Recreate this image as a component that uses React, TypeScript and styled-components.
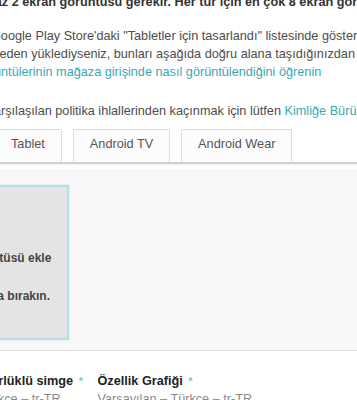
import styled, { createGlobalStyle } from 'styled-components';

const GlobalStyle = createGlobalStyle`
  body {
    margin: 0;
    background: #ffffff;
    font-family: "Liberation Sans", Arial, sans-serif;
  }
`;

interface LineProps {
  $shift: number;
  $gap?: number;
}

function App() {
  return (
    <Page>
      <GlobalStyle />
      <Intro>
        <Rule $shift={-25}>
          En az 2 ekran görüntüsü gerekir. Her tür için en çok 8 ekran görüntüsü ekleyebilirsiniz.
        </Rule>
        <Line $shift={-9} $gap={16}>
          Google Play Store'daki "Tabletler için tasarlandı" listesinde gösterilmek için
        </Line>
        <Line $shift={-21}>
          önceden yüklediyseniz, bunları aşağıda doğru alana taşıdığınızdan emin olun.
        </Line>
        <Line $shift={-61}>
          <Link>Ekran görüntülerinin mağaza girişinde nasıl görüntülendiğini öğrenin</Link>
        </Line>
        <Line $shift={-14.5} $gap={21}>
          Karşılaşılan politika ihlallerinden kaçınmak için lütfen <Link>Kimliğe Bürünme</Link>{' '}
          politikasını okuyun.
        </Line>
      </Intro>

      <TabBar>
        <Tab>Tablet</Tab>
        <Tab>Android TV</Tab>
        <Tab>Android Wear</Tab>
      </TabBar>

      <Panel>
        <DropZone>
          <DropText>Ekran görüntüsü ekle</DropText>
          <DropText $gap={24}>Ya da buraya bırakın.</DropText>
        </DropZone>
      </Panel>

      <FieldRow>
        <Field $width={179.5}>
          <FieldLabel>
            Yüksek çözünürlüklü simge <Star>*</Star>
          </FieldLabel>
          <FieldHint>Varsayılan – Türkçe – tr-TR</FieldHint>
        </Field>
        <Field>
          <FieldLabel>
            Özellik Grafiği <Star>*</Star>
          </FieldLabel>
          <FieldHint>Varsayılan – Türkçe – tr-TR</FieldHint>
        </Field>
      </FieldRow>
    </Page>
  );
}

export default App;

const Page = styled.div`
  width: 357px;
  height: 400px;
  overflow: hidden;
  font-size: 12.7px;
  color: #4d4d4d;
`;

const Intro = styled.div`
  display: flex;
  flex-direction: column;
  margin-top: -7px;
`;

const Line = styled.div<LineProps>`
  white-space: nowrap;
  line-height: 18px;
  margin-left: ${({ $shift }) => $shift}px;
  margin-top: ${({ $gap }) => $gap ?? 0}px;
`;

const Rule = styled(Line)`
  font-weight: 700;
  color: #333333;
`;

const Link = styled.span`
  color: #3aa8b2;
`;

const TabBar = styled.div`
  display: flex;
  gap: 11px;
  margin-top: 9px;
  margin-left: -6px;
  border-bottom: 2px solid #d2d2d2;
  box-shadow: 0 1px 1px rgba(0, 0, 0, 0.05);
`;

const Tab = styled.div`
  height: 33px;
  box-sizing: border-box;
  padding: 5px 16px 0;
  line-height: 18px;
  white-space: nowrap;
  background: #fcfcfc;
  border: 1px solid #dcdcdc;
  border-bottom: none;
  border-radius: 2px 2px 0 0;
  color: #555555;
`;

const Panel = styled.div`
  margin-top: 6px;
  height: 181px;
  box-sizing: border-box;
  padding-top: 14px;
  background: #f8f8f8;
  border-top: 1px solid #f0f0f0;
  border-bottom: 1px solid #dedede;
`;

const DropZone = styled.div`
  width: 158px;
  height: 155px;
  box-sizing: border-box;
  margin-left: -89px;
  padding-top: 64px;
  display: flex;
  flex-direction: column;
  align-items: center;
  background: #e4e4e4;
  border: 2px solid #b9dce8;
  box-shadow: 0 0 2px rgba(185, 220, 232, 0.8);
`;

const DropText = styled.div<{ $gap?: number }>`
  font-size: 12px;
  font-weight: 700;
  line-height: 14px;
  white-space: nowrap;
  color: #444444;
  margin-top: ${({ $gap }) => $gap ?? 0}px;
`;

const FieldRow = styled.div`
  display: flex;
  gap: 12px;
  margin-top: 21px;
  margin-left: -94px;
`;

const Field = styled.div<{ $width?: number }>`
  display: flex;
  flex-direction: column;
  flex: ${({ $width }) => ($width ? `0 0 ${$width}px` : '1')};
  white-space: nowrap;
`;

const FieldLabel = styled.div`
  font-weight: 700;
  line-height: 18px;
  color: #222222;
`;

const Star = styled.span`
  color: #7cc9c4;
  font-size: 11px;
  vertical-align: top;
  margin-left: 2px;
`;

const FieldHint = styled.div`
  line-height: 18px;
  color: #8a8a8a;
`;
